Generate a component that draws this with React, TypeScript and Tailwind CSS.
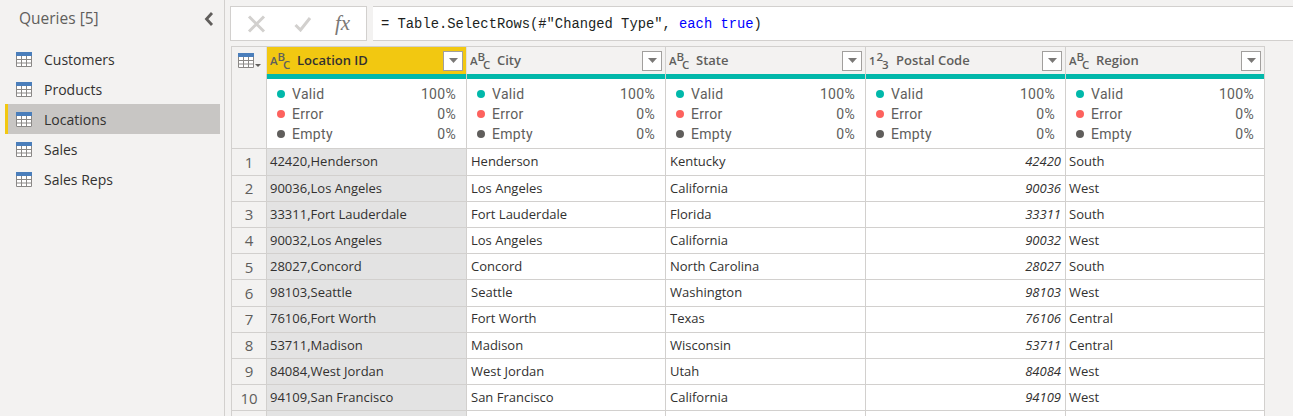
const queries = ["Customers", "Products", "Locations", "Sales", "Sales Reps"];

const columns = [
  { name: "Location ID", type: "abc", width: "w-[200px]" },
  { name: "City", type: "abc", width: "w-[199px]" },
  { name: "State", type: "abc", width: "w-[200px]" },
  { name: "Postal Code", type: "num", width: "w-[200px]" },
  { name: "Region", type: "abc", width: "w-[199px]" },
];

const rows = [
  ["42420,Henderson", "Henderson", "Kentucky", "42420", "South"],
  ["90036,Los Angeles", "Los Angeles", "California", "90036", "West"],
  ["33311,Fort Lauderdale", "Fort Lauderdale", "Florida", "33311", "South"],
  ["90032,Los Angeles", "Los Angeles", "California", "90032", "West"],
  ["28027,Concord", "Concord", "North Carolina", "28027", "South"],
  ["98103,Seattle", "Seattle", "Washington", "98103", "West"],
  ["76106,Fort Worth", "Fort Worth", "Texas", "76106", "Central"],
  ["53711,Madison", "Madison", "Wisconsin", "53711", "Central"],
  ["84084,West Jordan", "West Jordan", "Utah", "84084", "West"],
  ["94109,San Francisco", "San Francisco", "California", "94109", "West"],
];

function TableIcon() {
  return (
    <svg width="16" height="15" viewBox="0 0 16 15" className="shrink-0">
      <rect x="0" y="0" width="16" height="15" fill="#fff" />
      <rect x="0" y="0" width="16" height="4" fill="#4a7ebb" />
      <path
        d="M.5 4v10.5h15V4M5.5 4v10M10.5 4v10M0 7.5h16M0 11h16"
        fill="none"
        stroke="#8a8886"
      />
    </svg>
  );
}

function TypeIcon({ type }: { type: string }) {
  const letters = type === "abc" ? ["A", "B", "C"] : ["1", "2", "3"];
  return (
    <svg width="21" height="26" viewBox="0 0 21 26" className="shrink-0" fontFamily="Open Sans, sans-serif" fill="#605e5c">
      <text x="0" y="16.5" fontSize="11.5">{letters[0]}</text>
      <text x="7.4" y="12.5" fontSize="11.5">{letters[1]}</text>
      <text x="13" y="21" fontSize="11.5">{letters[2]}</text>
    </svg>
  );
}

function FilterButton() {
  return (
    <div className="w-[20px] h-[20px] shrink-0 border border-[#a19f9d] bg-white flex items-center justify-center">
      <svg width="9" height="5" viewBox="0 0 9 5">
        <path d="M0 0h9L4.5 5z" fill="#7a7876" />
      </svg>
    </div>
  );
}

function ProfileLine({ color, label, value }: { color: string; label: string; value: string }) {
  return (
    <div className="h-[20px] flex items-center">
      <span className="w-[8px] h-[8px] rounded-full shrink-0" style={{ backgroundColor: color }} />
      <span className="ml-[7px] flex-1">{label}</span>
      <span>{value}</span>
    </div>
  );
}

export default function App() {
  return (
    <div className="w-[1293px] h-[416px] overflow-hidden flex bg-[#f3f2f1] font-['Open_Sans',sans-serif] text-[13px] text-[#323130]">
      {/* queries pane */}
      <div className="w-[225px] h-full shrink-0 border-r border-[#d2d0ce] pl-[5px] pr-[4px]">
        <div className="h-[34px] pt-[3px] flex items-center justify-between pl-[14px] pr-[6px]">
          <span className="text-[15.5px] text-[#605e5c]">Queries [5]</span>
          <svg width="10" height="14" viewBox="0 0 10 14">
            <path d="M8 1 2.5 7 8 13" fill="none" stroke="#605e5c" strokeWidth="2.8" />
          </svg>
        </div>
        <div className="mt-[10px]">
          {queries.map((q) => (
            <div
              key={q}
              className={
                q === "Locations"
                  ? "h-[30px] flex items-center gap-[12px] pl-[8px] text-[14px] bg-[#c8c6c4] border-l-[3px] border-[#f2c811]"
                  : "h-[30px] flex items-center gap-[12px] pl-[11px] text-[14px]"
              }
            >
              <TableIcon />
              <span>{q}</span>
            </div>
          ))}
        </div>
      </div>

      <div className="flex-1 min-w-0 pl-[5px] pt-[6px]">
        {/* formula bar */}
        <div className="flex h-[35px] gap-[6px]">
          <div className="w-[137px] h-full bg-white border border-[#d2d0ce] flex items-center pl-[16px]">
            <svg width="20" height="18" viewBox="0 0 20 18">
              <path d="M2 1.5 17 16.5M17 1.5 2 16.5" stroke="#d2d0ce" strokeWidth="3" />
            </svg>
            <svg width="18" height="16" viewBox="0 0 18 16" className="ml-[27px]">
              <path d="M1.5 9 6.5 14 16 2" fill="none" stroke="#d2d0ce" strokeWidth="3" />
            </svg>
            <span className="ml-[23px] font-['Liberation_Serif',serif] italic text-[21px] text-[#7a7876]">fx</span>
          </div>
          <div className="flex-1 h-full bg-white border-y border-[#d2d0ce] flex items-center pl-[8px] pt-[3px] font-['Liberation_Mono',monospace] text-[13.8px] text-[#201f1e]">
            <span className="whitespace-pre">
              = Table.SelectRows(#"Changed Type", <span className="text-[#0000ff]">each</span>{" "}
              <span className="text-[#0000ff]">true</span>)
            </span>
          </div>
        </div>

        {/* data grid */}
        <div className="mt-[5px] w-[1034px] border-l border-t border-r border-[#d2d0ce] ml-[1px] bg-white">
          <div className="flex h-[27px] bg-[#f3f2f1]">
            <div className="w-[35px] shrink-0 border-r border-[#e1dfdd] flex items-center justify-center gap-[1px]">
              <TableIcon />
              <svg width="6" height="3" viewBox="0 0 6 3" className="mt-[9px]">
                <path d="M0 0h6L3 3z" fill="#605e5c" />
              </svg>
            </div>
            {columns.map((c, i) => (
              <div
                key={c.name}
                className={
                  i === 0
                    ? `${c.width} shrink-0 flex items-center pl-[3px] pr-[3px] bg-[#f2c811] border-r border-[#e1dfdd] font-semibold text-[#323130]`
                    : `${c.width} shrink-0 flex items-center pl-[3px] pr-[3px] border-r border-[#d2d0ce] font-semibold text-[#605e5c]`
                }
              >
                <TypeIcon type={c.type} />
                <span className="ml-[6px] flex-1 truncate">{c.name}</span>
                <FilterButton />
              </div>
            ))}
          </div>

          <div className="flex h-[75.47px] border-b border-[#d2d0ce]">
            <div className="w-[35px] shrink-0 bg-[#f3f2f1] border-r border-[#d2d0ce]" />
            {columns.map((c) => (
              <div key={c.name} className={`${c.width} shrink-0 border-r border-[#d2d0ce]`}>
                <div className="h-[5px] bg-[#01b8aa]" />
                <div className="pt-[5px] pl-[10px] pr-[10px] font-['Roboto',sans-serif] text-[14px] text-[#605e5c] tracking-[0.3px]">
                  <ProfileLine color="#01b8aa" label="Valid" value="100%" />
                  <ProfileLine color="#fd625e" label="Error" value="0%" />
                  <ProfileLine color="#605e5c" label="Empty" value="0%" />
                </div>
              </div>
            ))}
          </div>

          {rows.map((r, i) => (
            <div key={r[0]} className="flex h-[26.2px] border-b border-[#d2d0ce]">
              <div className="w-[35px] shrink-0 bg-[#f3f2f1] border-r border-[#d2d0ce] flex items-center justify-center text-[15px] text-[#605e5c]">
                {i + 1}
              </div>
              {r.map((v, j) => (
                <div
                  key={j}
                  className={
                    j === 0
                      ? `${columns[j].width} shrink-0 bg-[#e3e3e3] border-r border-[#d2d0ce] flex items-center pl-[3px] pr-[4px]`
                      : j === 3
                        ? `${columns[j].width} shrink-0 border-r border-[#d2d0ce] flex items-center justify-end px-[4px] italic`
                        : j === 4
                          ? `${columns[j].width} shrink-0 border-r border-[#d2d0ce] flex items-center pl-[3px] pr-[4px]`
                          : `${columns[j].width} shrink-0 border-r border-[#d2d0ce] flex items-center px-[4px]`
                  }
                >
                  {v}
                </div>
              ))}
            </div>
          ))}

          <div className="flex h-[10px]">
            <div className="w-[35px] shrink-0 bg-[#f3f2f1] border-r border-[#d2d0ce]" />
            {columns.map((c, j) => (
              <div
                key={c.name}
                className={
                  j === 0
                    ? `${c.width} shrink-0 bg-[#e3e3e3] border-r border-[#d2d0ce]`
                    : `${c.width} shrink-0 border-r border-[#d2d0ce]`
                }
              />
            ))}
          </div>
        </div>
      </div>
    </div>
  );
}
